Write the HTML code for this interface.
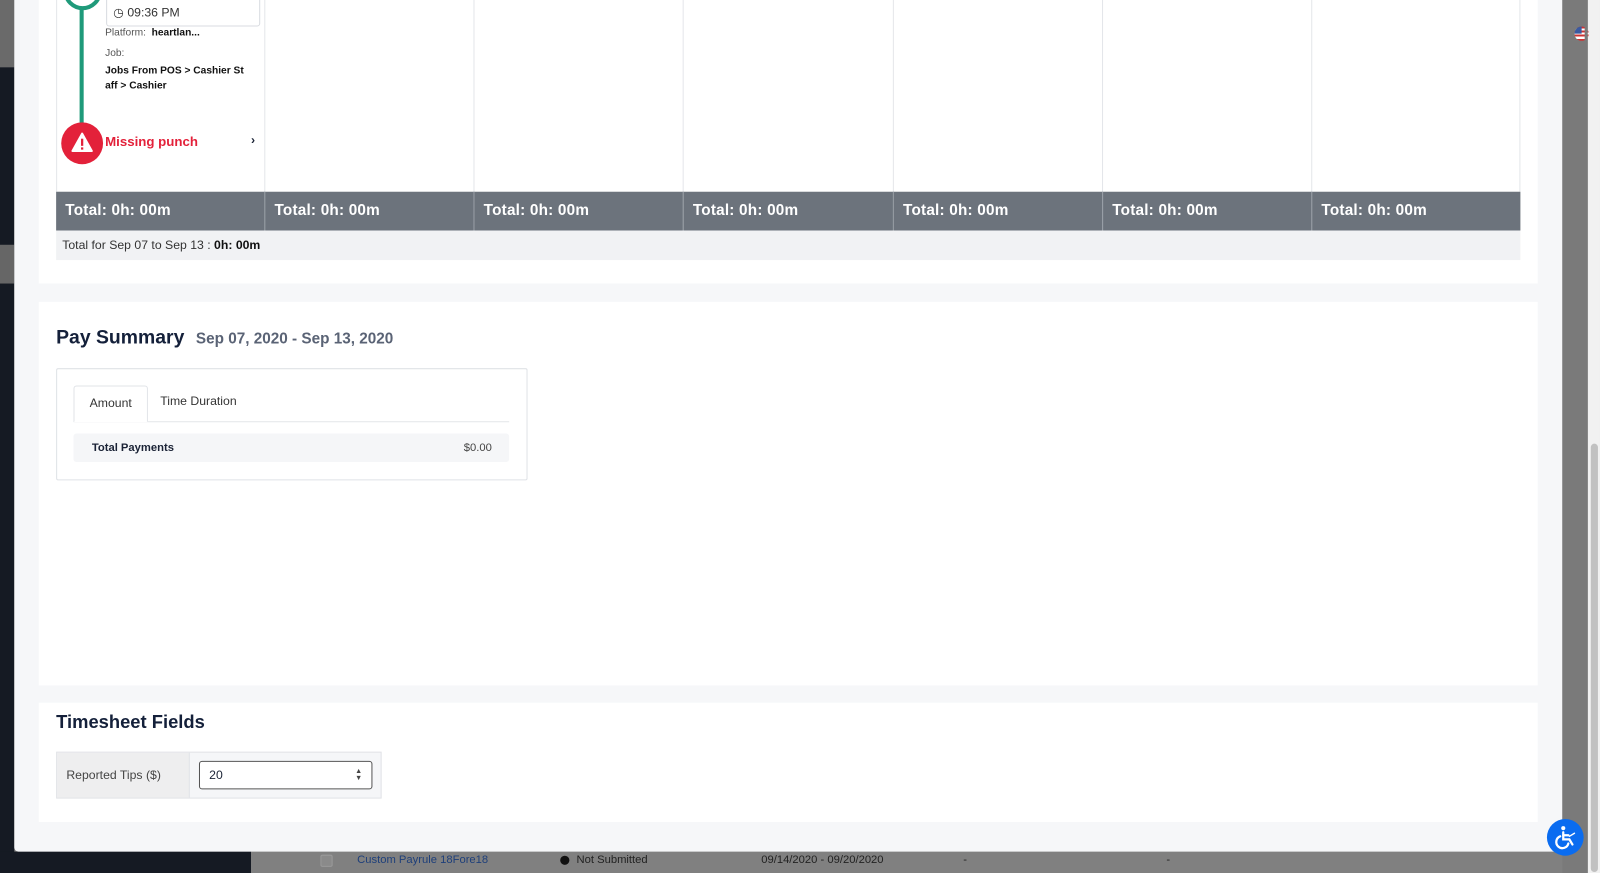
<!DOCTYPE html>
<html><head><style>
*{box-sizing:border-box;margin:0;padding:0}
body{width:1600px;height:873px;overflow:hidden;position:relative;background:#7d7d7d;font-family:"Liberation Sans",sans-serif;color:#1b2336}
#w{position:absolute;left:0;top:0;width:1568px;height:856px;transform:scale(1.0204,1.0199);transform-origin:0 0}
.abs{position:absolute}
.card{position:absolute;left:38px;width:1469px;background:#fff}
.col{position:absolute;top:0;height:188px;border-right:1px solid #e4e6ea}
.tot{position:absolute;top:188px;height:38px;background:#6c737c;color:#fff;font-weight:bold;font-size:15px;line-height:38px;padding-left:9px;border-right:1px solid #9aa0a7;letter-spacing:0.2px}
</style></head><body><div id="w">
<div class="abs" style="left:0;top:0;width:14px;height:66px;background:#6a6a6a"></div>
<div class="abs" style="left:0;top:66px;width:14px;height:790px;background:#151a23"></div>
<div class="abs" style="left:0;top:240px;width:14px;height:38px;background:#666"></div>
<div class="abs" style="left:1531px;top:0;width:25px;height:856px;background:#7a7a7a"></div>
<div class="abs" style="left:1556px;top:0;width:12px;height:856px;background:#f1f1f1"></div>
<div class="abs" style="left:1559px;top:435px;width:7px;height:420px;background:#c1c1c1;border-radius:4px"></div>
<div class="abs" style="left:1543px;top:26px;width:14px;height:14px;border-radius:50%;overflow:hidden;background:repeating-linear-gradient(#c33 0 2px,#fff 2px 4px)"><div style="width:7px;height:7px;background:#3b5aa0"></div></div>
<div class="abs" style="left:1553px;top:0;width:3px;height:856px;background:#7a7a7a"></div>
<!-- bottom strip -->
<div class="abs" style="left:0;top:835px;width:246px;height:21px;background:#151a23"></div>
<div class="abs" style="left:246px;top:835px;width:1285px;height:21px;background:#808080"></div>
<div class="abs" style="left:314px;top:838px;width:12px;height:12px;border:1px solid #999;border-radius:2px;background:#8a8a8a"></div>
<div class="abs" style="left:350px;top:837px;font-size:11px;color:#1e3f7a">Custom Payrule 18Fore18</div>
<div class="abs" style="left:549px;top:839px;width:9px;height:9px;border-radius:50%;background:#111"></div>
<div class="abs" style="left:565px;top:837px;font-size:11px;color:#222">Not Submitted</div>
<div class="abs" style="left:746px;top:837px;font-size:11px;color:#222">09/14/2020 - 09/20/2020</div>
<div class="abs" style="left:944px;top:837px;font-size:11px;color:#222">-</div>
<div class="abs" style="left:1143px;top:837px;font-size:11px;color:#222">-</div>
<!-- modal -->
<div class="abs" style="left:14px;top:0;width:1517px;height:835px;background:#f6f7f9;border-radius:0 0 4px 4px"></div>
<div class="card" style="top:0;height:278px">
 <div class="abs" style="left:17px;top:0;width:1435px;height:255px">
  <div class="col" style="left:0;width:205px;border-left:1px solid #e4e6ea"></div>
  <div class="col" style="left:205px;width:205px"></div>
  <div class="col" style="left:410px;width:205px"></div>
  <div class="col" style="left:615px;width:206px"></div>
  <div class="col" style="left:821px;width:205px"></div>
  <div class="col" style="left:1026px;width:205px"></div>
  <div class="col" style="left:1231px;width:204px"></div>
  <div class="tot" style="left:0;width:205px">Total: 0h: 00m</div>
  <div class="tot" style="left:205px;width:205px">Total: 0h: 00m</div>
  <div class="tot" style="left:410px;width:205px">Total: 0h: 00m</div>
  <div class="tot" style="left:615px;width:206px">Total: 0h: 00m</div>
  <div class="tot" style="left:821px;width:205px">Total: 0h: 00m</div>
  <div class="tot" style="left:1026px;width:205px">Total: 0h: 00m</div>
  <div class="tot" style="left:1231px;width:204px;border-right:none">Total: 0h: 00m</div>
  <div class="abs" style="left:0;top:226px;width:1435px;height:29px;background:#f1f2f4;font-size:12px;line-height:29px;padding-left:6px;color:#333">Total for Sep 07 to Sep 13 : <b style="color:#111">0h: 00m</b></div>
 </div>
 <div class="abs" style="left:40px;top:0;width:4px;height:122px;background:#1f9a7a"></div>
 <div class="abs" style="left:24px;top:-28px;width:38px;height:38px;border-radius:50%;border:4px solid #1f9a7a;background:#fff"></div>
 <div class="abs" style="left:66px;top:-4px;width:151px;height:30px;border:1px solid #d8dbe0;border-radius:3px;background:#fff;font-size:12px;line-height:30px;padding-left:6px;color:#333">&#9719; 09:36 PM</div>
 <div class="abs" style="left:65px;top:27px;font-size:10px;color:#555">Platform:&nbsp; <b style="color:#111">heartlan...</b></div>
 <div class="abs" style="left:65px;top:47px;font-size:10px;color:#555">Job:</div>
 <div class="abs" style="left:65px;top:62px;width:150px;font-size:10px;line-height:15px;font-weight:bold;color:#111">Jobs From POS &gt; Cashier St aff &gt; Cashier</div>
 <div class="abs" style="left:22px;top:120px;width:41px;height:41px;border-radius:50%;background:#e3213a">
  <svg width="41" height="41" viewBox="0 0 41 41"><path d="M20.5 11 L30 28 H11 Z" fill="#fff" stroke="#fff" stroke-linejoin="round" stroke-width="2"/><rect x="19.4" y="16" width="2.2" height="7" fill="#e3213a"/><rect x="19.4" y="24.5" width="2.2" height="2.2" fill="#e3213a"/></svg>
 </div>
 <div class="abs" style="left:65px;top:131px;font-size:13px;font-weight:bold;color:#e3213a">Missing punch</div>
 <div class="abs" style="left:208px;top:130px;font-size:12px;font-weight:bold">›</div>
</div>
<div class="card" style="top:296px;height:376px">
 <div class="abs" style="left:17px;top:25px;font-size:19px;font-weight:bold;color:#14203a">Pay Summary <span style="font-size:15px;color:#5a6375;margin-left:6px">Sep 07, 2020 - Sep 13, 2020</span></div>
 <div class="abs" style="left:17px;top:65px;width:462px;height:110px;border:1px solid #dfe2e6;border-radius:2px">
  <div class="abs" style="left:16px;top:51px;width:427px;height:1px;background:#e4e6ea"></div>
  <div class="abs" style="left:16px;top:16px;width:73px;height:36px;border:1px solid #e0e3e7;border-bottom:1px solid #fff;border-radius:3px 3px 0 0;background:#fff;font-size:12px;line-height:32px;text-align:center;color:#333">Amount</div>
  <div class="abs" style="left:101px;top:24px;font-size:12px;color:#333">Time Duration</div>
  <div class="abs" style="left:16px;top:63px;width:427px;height:28px;background:#f5f6f8;border-radius:3px;font-size:11px;line-height:28px">
   <b style="position:absolute;left:18px">Total Payments</b><span style="position:absolute;right:17px;color:#444">$0.00</span></div>
 </div>
</div>
<div class="card" style="top:689px;height:117px">
 <div class="abs" style="left:17px;top:9px;font-size:18px;font-weight:bold;color:#14203a">Timesheet Fields</div>
 <div class="abs" style="left:17px;top:48px;width:319px;height:46px;border:1px solid #e1e3e7;background:#f5f6f8">
  <div class="abs" style="left:0;top:0;width:130px;height:44px;background:#eeeeef;border-right:1px solid #e1e3e7;font-size:12px;line-height:44px;padding-left:9px;color:#444">Reported Tips ($)</div>
  <div class="abs" style="left:139px;top:8px;width:170px;height:28px;border:1px solid #555;border-radius:3px;background:#fff;font-size:12px;line-height:26px;padding-left:9px">20<span style="position:absolute;right:9px;top:0;font-size:7px;line-height:7px;padding-top:6px;color:#444">▲<br>▼</span></div>
 </div>
</div>
<div class="abs" style="left:1516px;top:803px;width:36px;height:36px;border-radius:50%;background:#0a6cf0">
 <svg width="36" height="36" viewBox="0 0 36 36" fill="none" stroke="#fff" stroke-width="2.2" stroke-linecap="round"><circle cx="16" cy="9" r="2" fill="#fff" stroke="none"/><path d="M16 13v7h6l3 5"/><path d="M16 16h5"/><path d="M13 17a6 6 0 1 0 8 7"/><path d="M22 17l5-3" stroke-width="1.4"/></svg>
</div>
</div></body></html>
